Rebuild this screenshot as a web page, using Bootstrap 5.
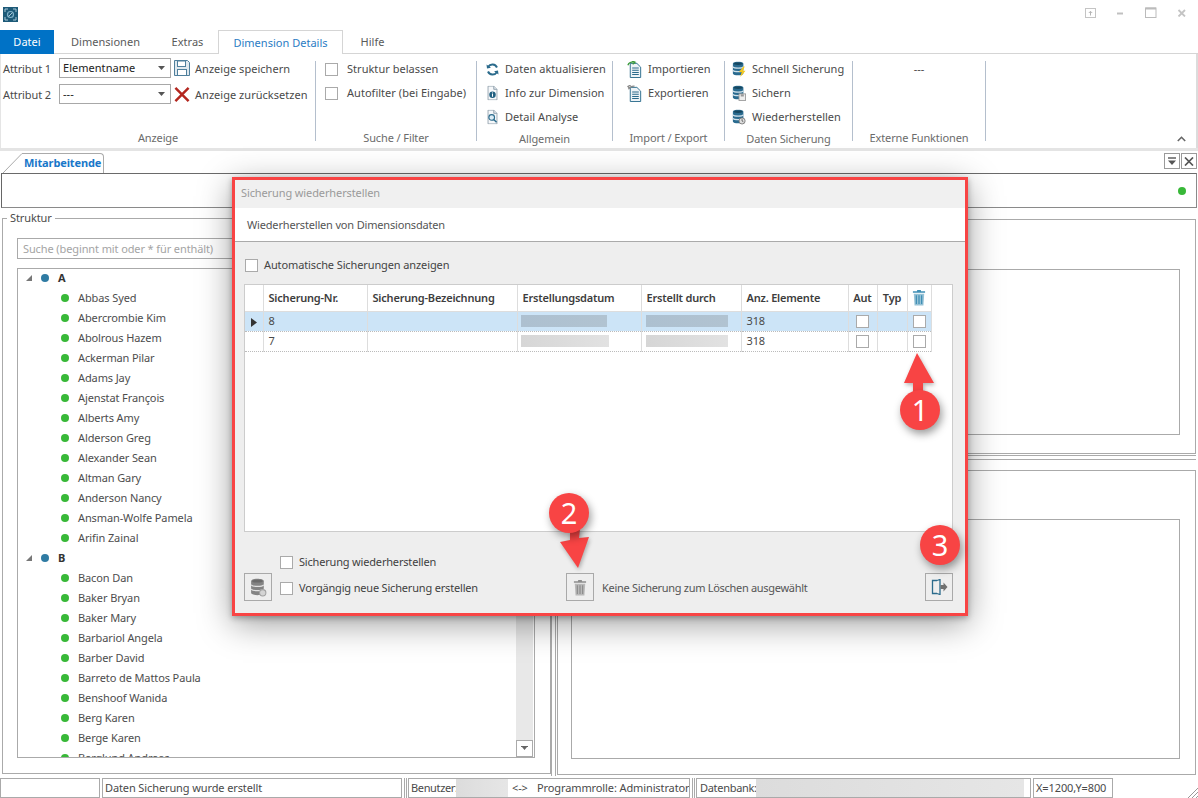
<!DOCTYPE html>
<html lang="de">
<head>
<meta charset="utf-8">
<title>Sicherung wiederherstellen</title>
<link href="https://cdn.jsdelivr.net/npm/bootstrap@5.3.0/dist/css/bootstrap.min.css" rel="stylesheet">
<style>
html,body{height:798px;overflow:hidden}
body{width:1198px;font-family:"Noto Sans","Open Sans",sans-serif;font-size:11px;letter-spacing:-.11px;line-height:14px;color:#4a4a4a;background:#fff}
.app-shell{height:798px;position:relative}
.title-strip{height:30px;padding:7px 11px 0 3px}
.win-btns svg{display:block}
.wb1{margin-right:17px}.wb2{margin-right:19px}.wb3{margin-right:20px}
.tab-row{height:24px;border-bottom:1px solid #d5d5d5;letter-spacing:.02px}
.rtab{height:24px;line-height:23px;text-align:center;color:#5a5a5a}
.rtab-file{width:54px;background:#0072c6;color:#fff}
.rtab-dim{width:103px}
.rtab-ext{width:61px}
.rtab-det{width:125px;background:#fff;color:#2b7cc4;border:1px solid #d5d5d5;border-bottom:0;position:relative}
.rtab-hil{width:59px}
.ribbon-box{height:94px;border-right:2px solid #dcdcdc;border-left:1px solid #e5e5e5;letter-spacing:.03px}
.rgroup{display:flex;flex-direction:column}
.rbody{flex:1 1 auto;padding-top:3px}
.rlabel{height:20px;line-height:20px;text-align:center;color:#6b6b6b;flex:none;letter-spacing:-.11px}
.rsep{width:1px;margin:7px 0;background:#b4bfcd;flex:none}
.g1{width:314px}.g2{width:160px}.g3{width:135px}.g4{width:111px}.g5{width:127px}.g6{width:132px}
.rrow{height:24px;display:flex;align-items:center;white-space:nowrap}
.g1 .rbody{padding-top:4px;padding-left:2px}
.attr-row{height:20px;display:flex;align-items:center;margin-bottom:6px;white-space:nowrap}
.attr-row>span{padding-top:2px}
.attr-name{width:56px;flex:none;letter-spacing:-.11px}
.attr-sel.form-select{width:112px;height:20px;min-height:20px;padding:0 14px 0 3px;font-family:inherit;font-size:11px;letter-spacing:inherit;line-height:18px;border:1px solid #a8a8a8;border-radius:0;color:#222;flex:none;background-size:7px 4px;background-position:right 5px center;box-shadow:none;background-image:url("data:image/svg+xml,%3csvg xmlns='http://www.w3.org/2000/svg' viewBox='0 0 7 4'%3e%3cpath fill='%23555' d='M0 0h7L3.5 4z'/%3e%3c/svg%3e")}
.attr-ico{width:16px;margin:0 5px 0 3px;flex:none;display:block}
.tick.form-check-input{width:13px;height:13px;margin:0;border:1px solid #aaa;border-radius:0;background-color:#fff;flex:none;float:none}
.tick.form-check-input.ctl-tick{margin:0 9px 0 9px}
.ric{flex:none;display:block}
.g3 .rbody{padding-left:9px}.g3 .ric{margin-right:6px}
.g4 .rbody{padding-left:14px}.g4 .ric{margin-right:5px}
.g5 .rbody{padding-left:7px}.g5 .ric{margin-right:6px}
.g6 .rbody{text-align:center;line-height:24px}
.collapse-ico{position:absolute;left:1177px;top:136px}
.grey-band{height:3px;background:#e4e4e4}
.tab-strip{height:22px;padding-top:2px}
.doc-tab{height:20px;margin-left:3px}
.doc-tab svg{display:block}
.doc-label{height:20px;border-top:1px solid #aaa;border-right:1px solid #aaa;border-top-right-radius:4px;padding:2px 0 0 2px;color:#1877c9;font-weight:700;margin-left:-1px;width:82px}
.pane-btns{margin-right:1px}
.pane-btn{width:16px;height:16px;border:1px solid #9a9a9a;margin-left:1px;display:flex;align-items:center;justify-content:center}
.info-strip{height:35px;border:1px solid #8a8a8a;border-top:1px solid #6a6a6a;border-left:1px solid #666;margin:0 0 0 1px;width:1196px;padding-right:10px}
.dot{border-radius:50%;display:inline-block;flex:none;width:8px;height:8px}
.dot-g{background:#38b838}
.dot-b{background:#2f7ba3}
.main-area{height:567px;padding:3px 2px 0 2px}
.fs-panel{width:549px;height:563px;border:1px solid #aaa;padding:0 15px 15px 14px;margin:0;display:flex;flex-direction:column}
.fs-panel legend{float:none;width:auto;margin:0 0 13px -10px;padding:0 3px;font-size:11px;line-height:14px;color:#4a4a4a}
.search-box{height:21px;border:1px solid #aaa;padding:2px 5px;color:#a4a4a4;flex:none;margin-bottom:9px;line-height:15px}
.tree-box{flex:1 1 auto;border:1px solid #aaa;min-height:0;overflow:hidden}
.tree-list{flex:1 1 auto;overflow:hidden;margin:0;padding:0}
.tree-row{height:20px;display:flex;align-items:center;white-space:nowrap;color:#4d4d4d;position:relative;top:-1px}
.tree-top{padding-left:8px;font-weight:700;color:#333}
.tree-top .dot{margin:0 9px 0 9px}
.tree-leaf{padding-left:43px}
.tree-leaf .dot{margin-right:9px}
.tri{flex:none;width:0;height:0;border-style:solid;border-width:0 0 6px 6px;border-color:transparent transparent #777 transparent}
.vbar{width:17px;background:#e8e8e8;flex:none;margin-right:1px}
.vbar-down{height:17px;margin-left:auto;width:17px;border:1px solid #aaa;background:#fff;display:flex;align-items:center;justify-content:center;margin-top:auto}
.vsplit{width:5px;height:565px;border-left:1px solid #aaa;border-right:1px solid #aaa;margin:0 1px 0 0;flex:none}
.right-col{width:639px;height:565px}
.box-panel{border:1px solid #aaa;padding:0 15px 0 13px;flex:none}
.box-up{height:235px;margin-top:8px;padding-top:49px;padding-bottom:18px}
.hsplit{height:5px;border-top:1px solid #aaa;border-bottom:1px solid #aaa;margin:1px 0 10px;flex:none}
.box-down{height:305px;padding-top:48px;padding-bottom:15px}
.inner-box{border:1px solid #aaa;height:100%}
.status-row{height:20px;padding:0;position:absolute;left:0;top:778px;width:1198px}
.scell{height:20px;border:1px solid #aaa;line-height:18px;padding:0 2px;white-space:nowrap;overflow:hidden;flex:none}
.blurred{background:linear-gradient(90deg,#dcdcdc,#e6e6e6);flex:none;display:block}
.c1{width:100px}.c2{width:300px;margin-left:2px}.c3{width:282px}.c4{width:335px}.c5{width:80px;margin-left:2px}
.sdiv{width:3px;height:20px;margin:0 1px 0 2px;border-left:1px solid #aaa;border-right:1px solid #aaa;flex:none}
.lbl-user{width:45px;flex:none;letter-spacing:-.35px}.lbl-arrow{width:25px;margin-left:4px;flex:none}.lbl-db{width:57px;flex:none;padding-left:1px;letter-spacing:-.3px}
.grip{position:absolute;right:0;bottom:0}
.modal-box{position:absolute;left:232px;top:177px;width:736px;height:439px;border:3px solid #f84444;background:#eee;box-shadow:0 8px 32px rgba(0,0,0,.38),0 2px 6px rgba(0,0,0,.3);display:flex;flex-direction:column}
.modal-title{height:28px;background:#f0f0f0;color:#9a9a9a;padding:6px 6px 0;flex:none}
.modal-head{height:34px;background:#fff;border-bottom:1px solid #aaa;padding:10px 12px 0;flex:none;color:#555;letter-spacing:-.17px}
.modal-main{flex:1 1 auto;padding:16px 12px 12px 9px;min-height:0}
.auto-row{height:14px;margin-bottom:12px;padding-left:1px;color:#444}
.auto-row .tick{margin-right:6px}
.grid-box{flex:1 1 auto;background:#fff;border:1px solid #ccc;min-height:0}
.dgrid.table{width:686px;table-layout:fixed;margin:0;background:#fff;--bs-table-bg:transparent}
.dgrid.table>*>*>*{padding:0 0 0 5px;border:0;border-right:1px solid #ddd;vertical-align:middle;font-size:11px;letter-spacing:-.11px;line-height:14px;color:#4a4a4a;box-shadow:none}
.dgrid.table>thead>*>*{height:26px;font-weight:600;border-bottom:1px solid #ddd;color:#3d3d3d;white-space:nowrap;padding-left:5px;letter-spacing:-.2px}
.dgrid.table>tbody>*>*{height:20px;border-bottom:1px dotted #bbb}
.dgrid.table>tbody>tr.row-sel>*{background:#cce4f7}
.dgrid.table>*>*>*.cc{padding:0;text-align:center}
.cc .tick{display:block;margin:0 auto}
.mask{height:12px;display:block;margin-left:-2px}
.mask-a{background:linear-gradient(90deg,#adc0d0,#b1c3d1)}
.mask-b{background:linear-gradient(90deg,#d6d6d6,#e2e2e2)}
.modal-foot{height:69px;flex:none;padding-top:24px}
.sq-btn{width:28px;height:28px;border:1px solid #a9a9a9;background:transparent;padding:0;border-radius:0;display:flex;align-items:center;justify-content:center;flex:none}
.foot-checks{margin-left:8px;width:278px;flex:none}
.foot-line{height:14px;color:#3f3f3f;letter-spacing:-.18px}
.foot-line .tick{margin-right:6px}
.foot-line+.foot-line{margin-top:12px;margin-bottom:6px}
.foot-msg{margin-left:8px;padding-bottom:6px;color:#555;letter-spacing:-.3px}
.num-badge{position:absolute;width:40px;height:40px;border-radius:50%;background:#f84444;color:#fff;text-align:center;font-size:29px;line-height:39px;letter-spacing:0;box-shadow:2px 4px 9px rgba(0,0,0,.4)}
.mark-svg{position:absolute;filter:drop-shadow(1px 2px 2px rgba(0,0,0,.3))}
</style>
</head>
<body>
<svg width="0" height="0" class="position-absolute">
<defs>
<symbol id="i-trash" viewBox="0 0 14 18"><path d="M5 1h4v1.5h4.5V4H.5V2.500H5z" fill="currentColor"/><path d="M1.500 5h11l-.8 12.500H2.300z" fill="currentColor" opacity=".55"/><path d="M4.200 6.500v9.500M7 6.500v9.500M9.800 6.500v9.500" stroke="currentColor" stroke-width="1.300"/></symbol>
<symbol id="i-db" viewBox="0 0 16 18"><path d="M1 3c0-3 12-3 12 0v11c0 3-12 3-12 0z" fill="#2a6b8f"/><path d="M1 6.500c1.500 2 10.500 2 12 0M1 10.500c1.500 2 10.500 2 12 0" stroke="#cfe0ea" stroke-width="1.200" fill="none"/><ellipse cx="7" cy="3" rx="5" ry="1.300" fill="#17475f"/></symbol>
<symbol id="i-doc" viewBox="0 0 16 18"><path d="M2.500.5h7l4 4v13h-11z" fill="#f6f8fa" stroke="#8a9aa6"/><path d="M9.500.5v4h4" fill="#d8e0e6" stroke="#8a9aa6"/></symbol>
<symbol id="i-lines" viewBox="0 0 16 18"><path d="M3 2.500h7l4 4v11H3z" fill="#eef3f7" stroke="#2b6b8c"/><path d="M5 7.500h7M5 9.800h7M5 12.100h7M5 14.400h7" stroke="#2b6b8c" stroke-width="1.100"/></symbol>
</defs>
</svg>
<div class="app-shell d-flex flex-column">

<div class="title-strip d-flex justify-content-between align-items-start flex-none">
<svg width="15" height="15" viewBox="0 0 15 15"><rect width="15" height="15" fill="#1d5a78"/><path d="M2 5V2h3M10 2h3v3M13 10v3h-3M5 13H2v-3" stroke="#a9c7d6" fill="none"/><circle cx="7.500" cy="7.500" r="3" fill="none" stroke="#7fb0c8" stroke-width="1.200"/><path d="M5.500 9.500l4-4" stroke="#a9c7d6"/></svg>
<div class="win-btns d-flex align-items-start">
<svg class="wb1" width="12" height="11" viewBox="0 0 12 11"><rect x=".5" y="1.500" width="10" height="9" fill="none" stroke="#c4c4c4"/><path d="M5.500 8.500v-4M3.800 6l1.700-1.700L7.200 6" fill="none" stroke="#b5b5b5"/></svg>
<svg class="wb2" width="12" height="11" viewBox="0 0 12 11"><path d="M3 6.500h6" stroke="#c0c0c0" stroke-width="2"/></svg>
<svg class="wb3" width="12" height="11" viewBox="0 0 12 11"><rect x=".5" y="1" width="10.500" height="9.500" fill="none" stroke="#bbb"/><path d="M.5 1.500h10.500" stroke="#bbb" stroke-width="2"/></svg>
<svg width="10" height="10" viewBox="0 0 10 10"><path d="M1.500 3l6.500 6.500M8 3l-6.500 6.500" stroke="#c4c4c4" stroke-width="1.800"/></svg>
</div>
</div>

<div class="tab-row d-flex flex-none">
<div class="rtab rtab-file">Datei</div>
<div class="rtab rtab-dim">Dimensionen</div>
<div class="rtab rtab-ext">Extras</div>
<div class="rtab rtab-det">Dimension Details</div>
<div class="rtab rtab-hil">Hilfe</div>
</div>

<div class="ribbon-box d-flex flex-none">
<div class="rgroup g1">
<div class="rbody">
<div class="attr-row"><span class="attr-name">Attribut 1</span><select class="form-select attr-sel"><option>Elementname</option></select>
<svg class="attr-ico" height="16" viewBox="0 0 16 16"><path d="M.5.500h13l2 2v13H.5z" fill="#dfe8ee" stroke="#4f7f9c"/><rect x="3.500" y="1" width="8" height="5.500" fill="#fff" stroke="#4f7f9c"/><rect x="3.500" y="9.500" width="9" height="6" fill="#fff" stroke="#4f7f9c"/></svg>
<span>Anzeige speichern</span></div>
<div class="attr-row"><span class="attr-name">Attribut 2</span><select class="form-select attr-sel"><option>---</option></select>
<svg class="attr-ico" height="17" viewBox="0 0 17 17"><path d="M1.500 1.500l14 14M15.500 1.500l-14 14" stroke="#b3261e" stroke-width="2.600"/></svg>
<span>Anzeige zurücksetzen</span></div>
</div>
<div class="rlabel">Anzeige</div>
</div>
<div class="rsep"></div>
<div class="rgroup g2">
<div class="rbody">
<div class="rrow"><input type="checkbox" class="form-check-input tick ctl-tick" aria-label="Struktur belassen"><span>Struktur belassen</span></div>
<div class="rrow"><input type="checkbox" class="form-check-input tick ctl-tick" aria-label="Autofilter"><span>Autofilter (bei Eingabe)</span></div>
</div>
<div class="rlabel">Suche / Filter</div>
</div>
<div class="rsep"></div>
<div class="rgroup g3">
<div class="rbody">
<div class="rrow"><svg class="ric" width="13" height="13" viewBox="0 0 13 13"><path d="M11 4.500A5 5 0 0 0 2.200 3.800M2 8.500a5 5 0 0 0 8.800.7" fill="none" stroke="#2b6b8c" stroke-width="2"/><path d="M.5 1.500l.5 4 4-.8zM12.500 11.500l-.5-4-4 .8z" fill="#2b6b8c"/></svg><span>Daten aktualisieren</span></div>
<div class="rrow"><svg class="ric" width="13" height="16" viewBox="0 0 16 18"><use href="#i-doc"/><circle cx="8" cy="11" r="4" fill="#1f5f80"/><path d="M8 10v3.500M8 8.300v.9" stroke="#fff" stroke-width="1.300"/></svg><span>Info zur Dimension</span></div>
<div class="rrow"><svg class="ric" width="13" height="16" viewBox="0 0 16 18"><use href="#i-doc"/><circle cx="7" cy="9.500" r="3.500" fill="#dcecf5" stroke="#2b6b8c" stroke-width="1.400"/><path d="M9.500 12l3.500 3.500" stroke="#2b6b8c" stroke-width="1.800"/></svg><span>Detail Analyse</span></div>
</div>
<div class="rlabel">Allgemein</div>
</div>
<div class="rsep"></div>
<div class="rgroup g4">
<div class="rbody">
<div class="rrow"><svg class="ric" width="16" height="17" viewBox="0 0 16 18"><use href="#i-lines"/><path d="M.5 4.500c1-3 4-3.500 6-3.500M5 .0l3 1.200L5.500 3.500" fill="none" stroke="#3a9a3a" stroke-width="1.400"/></svg><span>Importieren</span></div>
<div class="rrow"><svg class="ric" width="16" height="17" viewBox="0 0 16 18"><use href="#i-lines"/><path d="M7.500 1.200C5 1 2.500 2 1 4.500M3.500 0L.5 1.500 2.500 4" fill="none" stroke="#8a8a8a" stroke-width="1.400"/></svg><span>Exportieren</span></div>
</div>
<div class="rlabel">Import / Export</div>
</div>
<div class="rsep"></div>
<div class="rgroup g5">
<div class="rbody">
<div class="rrow"><svg class="ric" width="14" height="16" viewBox="0 0 16 18"><use href="#i-db"/><path d="M13 6l-5 6.500h3L9.500 18l6-7h-3l2-5z" fill="#f4c81e"/></svg><span>Schnell Sicherung</span></div>
<div class="rrow"><svg class="ric" width="14" height="16" viewBox="0 0 16 18"><use href="#i-db"/><rect x="8" y="10" width="7.500" height="7.500" fill="#eee" stroke="#999"/><rect x="10" y="10.500" width="3.500" height="2.500" fill="#999"/></svg><span>Sichern</span></div>
<div class="rrow"><svg class="ric" width="14" height="16" viewBox="0 0 16 18"><use href="#i-db"/><circle cx="11.500" cy="13.500" r="3.500" fill="#ddd" stroke="#777"/><path d="M11.500 11.500v2l1.500 1" stroke="#555" fill="none"/></svg><span>Wiederherstellen</span></div>
</div>
<div class="rlabel">Daten Sicherung</div>
</div>
<div class="rsep"></div>
<div class="rgroup g6">
<div class="rbody">---</div>
<div class="rlabel">Externe Funktionen</div>
</div>
<div class="rsep"></div>
</div>
<svg class="collapse-ico" width="9" height="6" viewBox="0 0 9 6"><path d="M.8 5l3.700-3.700L8.200 5" fill="none" stroke="#666" stroke-width="1.600"/></svg>

<div class="grey-band flex-none"></div>

<div class="tab-strip d-flex justify-content-between flex-none">
<div class="doc-tab d-flex">
<svg width="20" height="20" viewBox="0 0 20 20"><path d="M0 20L19 .5h1" fill="none" stroke="#aaa"/></svg>
<div class="doc-label">Mitarbeitende</div>
</div>
<div class="pane-btns d-flex">
<div class="pane-btn"><svg width="10" height="9" viewBox="0 0 10 9"><path d="M1 1h8" stroke="#555" stroke-width="1.400"/><path d="M1 3.500h8L5 8z" fill="#555"/></svg></div>
<div class="pane-btn"><svg width="10" height="9" viewBox="0 0 10 9"><path d="M1 .5l8 8M9 .5l-8 8" stroke="#555" stroke-width="1.700"/></svg></div>
</div>
</div>

<div class="info-strip d-flex justify-content-end align-items-center flex-none"><span class="dot dot-g"></span></div>

<div class="main-area d-flex flex-none">
<fieldset class="fs-panel flex-none">
<legend>Struktur</legend>
<div class="search-box">Suche (beginnt mit oder * für enthält)</div>
<div class="tree-box d-flex">
<div class="tree-list" id="tree"></div>
<div class="vbar d-flex flex-column"><div class="vbar-down"><svg width="7" height="5" viewBox="0 0 7 5"><path d="M0 0h7v1H6L3.500 4 1 1H0z" fill="#666"/></svg></div></div>
</div>
</fieldset>
<div class="vsplit"></div>
<div class="right-col d-flex flex-column">
<div class="box-panel box-up"><div class="inner-box"></div></div>
<div class="hsplit"></div>
<div class="box-panel box-down"><div class="inner-box"></div></div>
</div>
</div>

<div class="status-row d-flex">
<div class="scell c1"></div>
<div class="scell c2">Daten Sicherung wurde erstellt</div>
<div class="sdiv"></div>
<div class="scell c3 d-flex"><span class="lbl-user">Benutzer:</span><span class="blurred" style="width:52px"></span><span class="lbl-arrow">&lt;-&gt;</span><span>Programmrolle: Administrator</span></div>
<div class="sdiv"></div>
<div class="scell c4 d-flex"><span class="lbl-db">Datenbank:</span><span class="blurred" style="width:268px"></span></div>
<div class="scell c5">X=1200,Y=800</div>
<svg class="grip" width="12" height="10" viewBox="0 0 12 10"><path d="M2 10l10-10M6 10l6-6M10 10l2-2" stroke="#999"/></svg>
</div>

<div class="modal-box">
<div class="modal-title">Sicherung wiederherstellen</div>
<div class="modal-head">Wiederherstellen von Dimensionsdaten</div>
<div class="modal-main d-flex flex-column">
<div class="auto-row d-flex align-items-center flex-none"><input type="checkbox" class="form-check-input tick" aria-label="Automatische"><span>Automatische Sicherungen anzeigen</span></div>
<div class="grid-box">
<table class="table dgrid">
<colgroup><col style="width:18px"><col style="width:104px"><col style="width:150px"><col style="width:124px"><col style="width:100px"><col style="width:107px"><col style="width:29px"><col style="width:30px"><col style="width:24px"></colgroup>
<thead><tr><th></th><th>Sicherung-Nr.</th><th>Sicherung-Bezeichnung</th><th>Erstellungsdatum</th><th>Erstellt durch</th><th>Anz. Elemente</th><th class="cc">Aut</th><th class="cc">Typ</th><th class="cc"><svg width="14" height="17" viewBox="0 0 14 18" style="color:#3f8fb5"><use href="#i-trash"/></svg></th></tr></thead>
<tbody>
<tr class="row-sel"><td class="cc"><svg width="6" height="9" viewBox="0 0 6 9"><path d="M0 0l6 4.500L0 9z" fill="#333"/></svg></td><td>8</td><td></td><td><span class="mask mask-a" style="width:86px"></span></td><td><span class="mask mask-a" style="width:82px;margin-left:-1px"></span></td><td>318</td><td class="cc"><input type="checkbox" class="form-check-input tick" aria-label="Aut"></td><td></td><td class="cc"><input type="checkbox" class="form-check-input tick" aria-label="Löschen"></td></tr>
<tr><td></td><td>7</td><td></td><td><span class="mask mask-b" style="width:88px"></span></td><td><span class="mask mask-b" style="width:82px;margin-left:-1px"></span></td><td>318</td><td class="cc"><input type="checkbox" class="form-check-input tick" aria-label="Aut"></td><td></td><td class="cc"><input type="checkbox" class="form-check-input tick" aria-label="Löschen"></td></tr>
</tbody>
</table>
</div>
<div class="modal-foot d-flex align-items-end">
<button class="sq-btn" type="button" aria-label="Sichern"><svg width="17" height="19" viewBox="0 0 16 18" style="filter:grayscale(1);opacity:.75"><use href="#i-db"/><circle cx="12" cy="14" r="3" fill="#ccc" stroke="#888"/></svg></button>
<div class="foot-checks">
<div class="foot-line d-flex align-items-center"><input type="checkbox" class="form-check-input tick" aria-label="Sicherung"><span>Sicherung wiederherstellen</span></div>
<div class="foot-line d-flex align-items-center"><input type="checkbox" class="form-check-input tick" aria-label="Vorgängig"><span>Vorgängig neue Sicherung erstellen</span></div>
</div>
<button class="sq-btn ms-2" type="button" aria-label="Löschen" style="color:#8d8d8d"><svg width="14" height="17" viewBox="0 0 14 18"><use href="#i-trash"/></svg></button>
<div class="foot-msg">Keine Sicherung zum Löschen ausgewählt</div>
<button class="sq-btn ms-auto" type="button" aria-label="Schließen"><svg width="17" height="16" viewBox="0 0 17 16"><path d="M6 1.500H1.500v13H6M6 1.500l3-1v15l-3-1" fill="none" stroke="#2b6b8c" stroke-width="1.300"/><path d="M9.500 6h3V3.500L16.500 8l-4 4.500V10h-3z" fill="#707070"/></svg></button>
</div>
</div>
</div>

<svg class="mark-svg" style="left:900px;top:350px" width="36" height="44" viewBox="0 0 36 44"><path d="M17 3l17 30H23v11H13V33H4z" fill="#f84444"/></svg>
<div class="num-badge" style="left:900px;top:390px">1</div>
<svg class="mark-svg" style="left:555px;top:525px" width="40" height="46" viewBox="0 0 40 46"><path d="M15 4h10l-1 9 10-1-11 31L5 17l10-2z" fill="#f84444"/></svg>
<div class="num-badge" style="left:549px;top:493px">2</div>
<div class="num-badge" style="left:920px;top:525px">3</div>

</div>
<script>
var t=[["A",1],"Abbas Syed","Abercrombie Kim","Abolrous Hazem","Ackerman Pilar","Adams Jay","Ajenstat François","Alberts Amy","Alderson Greg","Alexander Sean","Altman Gary","Anderson Nancy","Ansman-Wolfe Pamela","Arifin Zainal",["B",1],"Bacon Dan","Baker Bryan","Baker Mary","Barbariol Angela","Barber David","Barreto de Mattos Paula","Benshoof Wanida","Berg Karen","Berge Karen","Berglund Andreas"];
document.getElementById('tree').innerHTML=t.map(function(x){return Array.isArray(x)?'<div class="tree-row tree-top"><span class="tri"></span><span class="dot dot-b"></span>'+x[0]+'</div>':'<div class="tree-row tree-leaf"><span class="dot dot-g"></span>'+x+'</div>'}).join('');
</script>
<script src="https://cdn.jsdelivr.net/npm/bootstrap@5.3.0/dist/js/bootstrap.bundle.min.js"></script>
</body>
</html>
